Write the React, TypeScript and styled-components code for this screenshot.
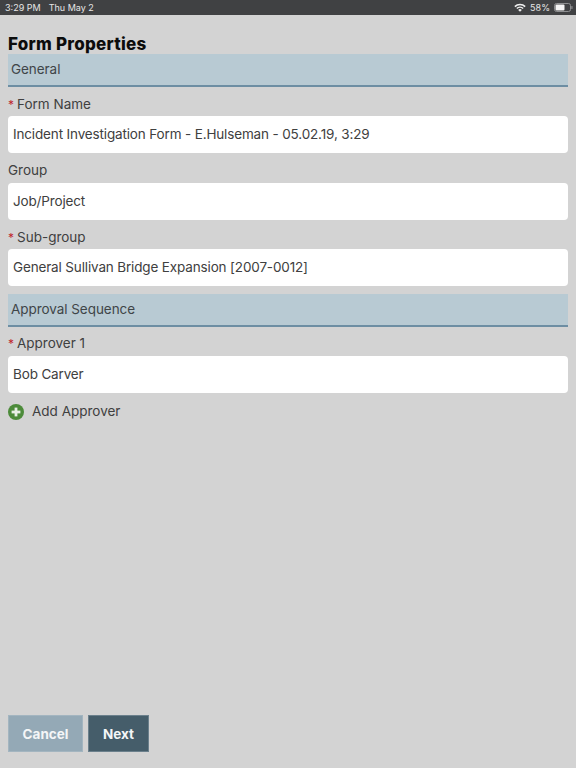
import React from 'react';
import styled, { createGlobalStyle } from 'styled-components';

const GlobalStyle = createGlobalStyle`
  html, body {
    margin: 0;
    padding: 0;
    background: #d3d3d3;
  }
  * {
    box-sizing: border-box;
  }
`;

const Page = styled.div`
  width: 576px;
  height: 768px;
  display: flex;
  flex-direction: column;
  background: #d3d3d3;
  color: #333;
  font-family: Inter, 'Liberation Sans', sans-serif;
  overflow: hidden;
`;

const StatusBar = styled.div`
  height: 15px;
  flex: none;
  display: flex;
  align-items: center;
  justify-content: space-between;
  padding: 0 3px 0 5px;
  background: #404143;
  color: #e6e6e6;
  font-size: 9px;
  line-height: 15px;
`;

const StatusGroup = styled.div<{ $gap: number }>`
  display: flex;
  align-items: center;
  gap: ${(p) => p.$gap}px;
`;

const Content = styled.div`
  flex: 1;
  display: flex;
  flex-direction: column;
  padding: 0 8px;
`;

const Title = styled.h1`
  margin: 20px 0 0;
  height: 19px;
  font-size: 17px;
  line-height: 19px;
  font-weight: 800;
  letter-spacing: 0.25px;
  color: #0c0c0c;
`;

const SectionBar = styled.div<{ $top?: number }>`
  height: 33px;
  flex: none;
  margin-top: ${(p) => p.$top ?? 0}px;
  display: flex;
  align-items: center;
  padding: 0 3px 1px;
  background: #b8cad3;
  border-bottom: 2px solid #6d8ea3;
  font-size: 13.5px;
  letter-spacing: -0.05px;
  color: #3f4548;
`;

const Label = styled.div<{ $top: number; $bottom: number }>`
  height: 15px;
  margin: ${(p) => p.$top}px 0 ${(p) => p.$bottom}px;
  display: flex;
  align-items: center;
  gap: 3px;
  font-size: 13.5px;
  line-height: 15px;
  color: #404040;
`;

const Star = styled.span`
  color: #c0272d;
  font-size: 12px;
`;

const Field = styled.div`
  height: 37px;
  flex: none;
  display: flex;
  align-items: center;
  padding: 0 5px 2px;
  background: #fff;
  border-radius: 4px;
  font-size: 13.5px;
  letter-spacing: -0.15px;
  color: #404040;
`;

const AddRow = styled.div`
  margin-top: 10px;
  display: flex;
  align-items: center;
  gap: 8px;
  font-size: 13.5px;
  line-height: 17px;
  color: #404040;
`;

const Actions = styled.div`
  margin-top: auto;
  margin-bottom: 16px;
  display: flex;
  gap: 5px;
`;

const ActionButton = styled.button<{ $primary?: boolean }>`
  width: ${(p) => (p.$primary ? 61 : 75)}px;
  height: 37px;
  padding: 0;
  border: 1px solid ${(p) => (p.$primary ? '#6b808c' : '#a3b5c0')};
  background: ${(p) => (p.$primary ? '#455d6a' : '#94a9b6')};
  color: #f4f6f7;
  font-family: inherit;
  font-size: 13.5px;
  font-weight: 700;
`;

const WifiIcon = () => (
  <svg width="12" height="9" viewBox="0 0 12 9">
    <path d="M0.3 3.1 A8 8 0 0 1 11.7 3.1 L10.6 4.2 A6.4 6.4 0 0 0 1.4 4.2 Z" fill="#f0f0f0" />
    <path d="M2.3 5 A5.2 5.2 0 0 1 9.7 5 L8.6 6.1 A3.7 3.7 0 0 0 3.4 6.1 Z" fill="#f0f0f0" />
    <path d="M4.2 6.9 A2.6 2.6 0 0 1 7.8 6.9 L6 8.8 Z" fill="#f0f0f0" />
  </svg>
);

const BatteryIcon = () => (
  <svg width="19" height="9" viewBox="0 0 19 9">
    <rect x="0.5" y="0.5" width="16" height="8" rx="2" fill="none" stroke="#8d8e90" />
    <rect x="1.5" y="1.5" width="9" height="6" rx="1" fill="#f4f4f4" />
    <rect x="17.3" y="3" width="1.2" height="3" rx="0.5" fill="#8d8e90" />
  </svg>
);

const PlusIcon = () => (
  <svg width="16" height="16" viewBox="0 0 16 16">
    <circle cx="8" cy="8" r="8" fill="#4c8b3a" />
    <rect x="3.6" y="6.6" width="8.8" height="2.8" fill="#e8efe5" />
    <rect x="6.6" y="3.6" width="2.8" height="8.8" fill="#e8efe5" />
  </svg>
);

const App = () => (
  <Page>
    <GlobalStyle />
    <StatusBar>
      <StatusGroup $gap={8}>
        <span>3:29 PM</span>
        <span>Thu May 2</span>
      </StatusGroup>
      <StatusGroup $gap={4}>
        <WifiIcon />
        <span>58%</span>
        <BatteryIcon />
      </StatusGroup>
    </StatusBar>
    <Content>
      <Title>Form Properties</Title>
      <SectionBar>General</SectionBar>
      <Label $top={10} $bottom={4}>
        <Star>*</Star>Form Name
      </Label>
      <Field>Incident Investigation Form - E.Hulseman - 05.02.19, 3:29</Field>
      <Label $top={10} $bottom={5}>Group</Label>
      <Field>Job/Project</Field>
      <Label $top={10} $bottom={4}>
        <Star>*</Star>Sub-group
      </Label>
      <Field>General Sullivan Bridge Expansion [2007-0012]</Field>
      <SectionBar $top={8}>Approval Sequence</SectionBar>
      <Label $top={9} $bottom={5}>
        <Star>*</Star>Approver 1
      </Label>
      <Field>Bob Carver</Field>
      <AddRow>
        <PlusIcon />
        Add Approver
      </AddRow>
      <Actions>
        <ActionButton>Cancel</ActionButton>
        <ActionButton $primary>Next</ActionButton>
      </Actions>
    </Content>
  </Page>
);

export default App;
